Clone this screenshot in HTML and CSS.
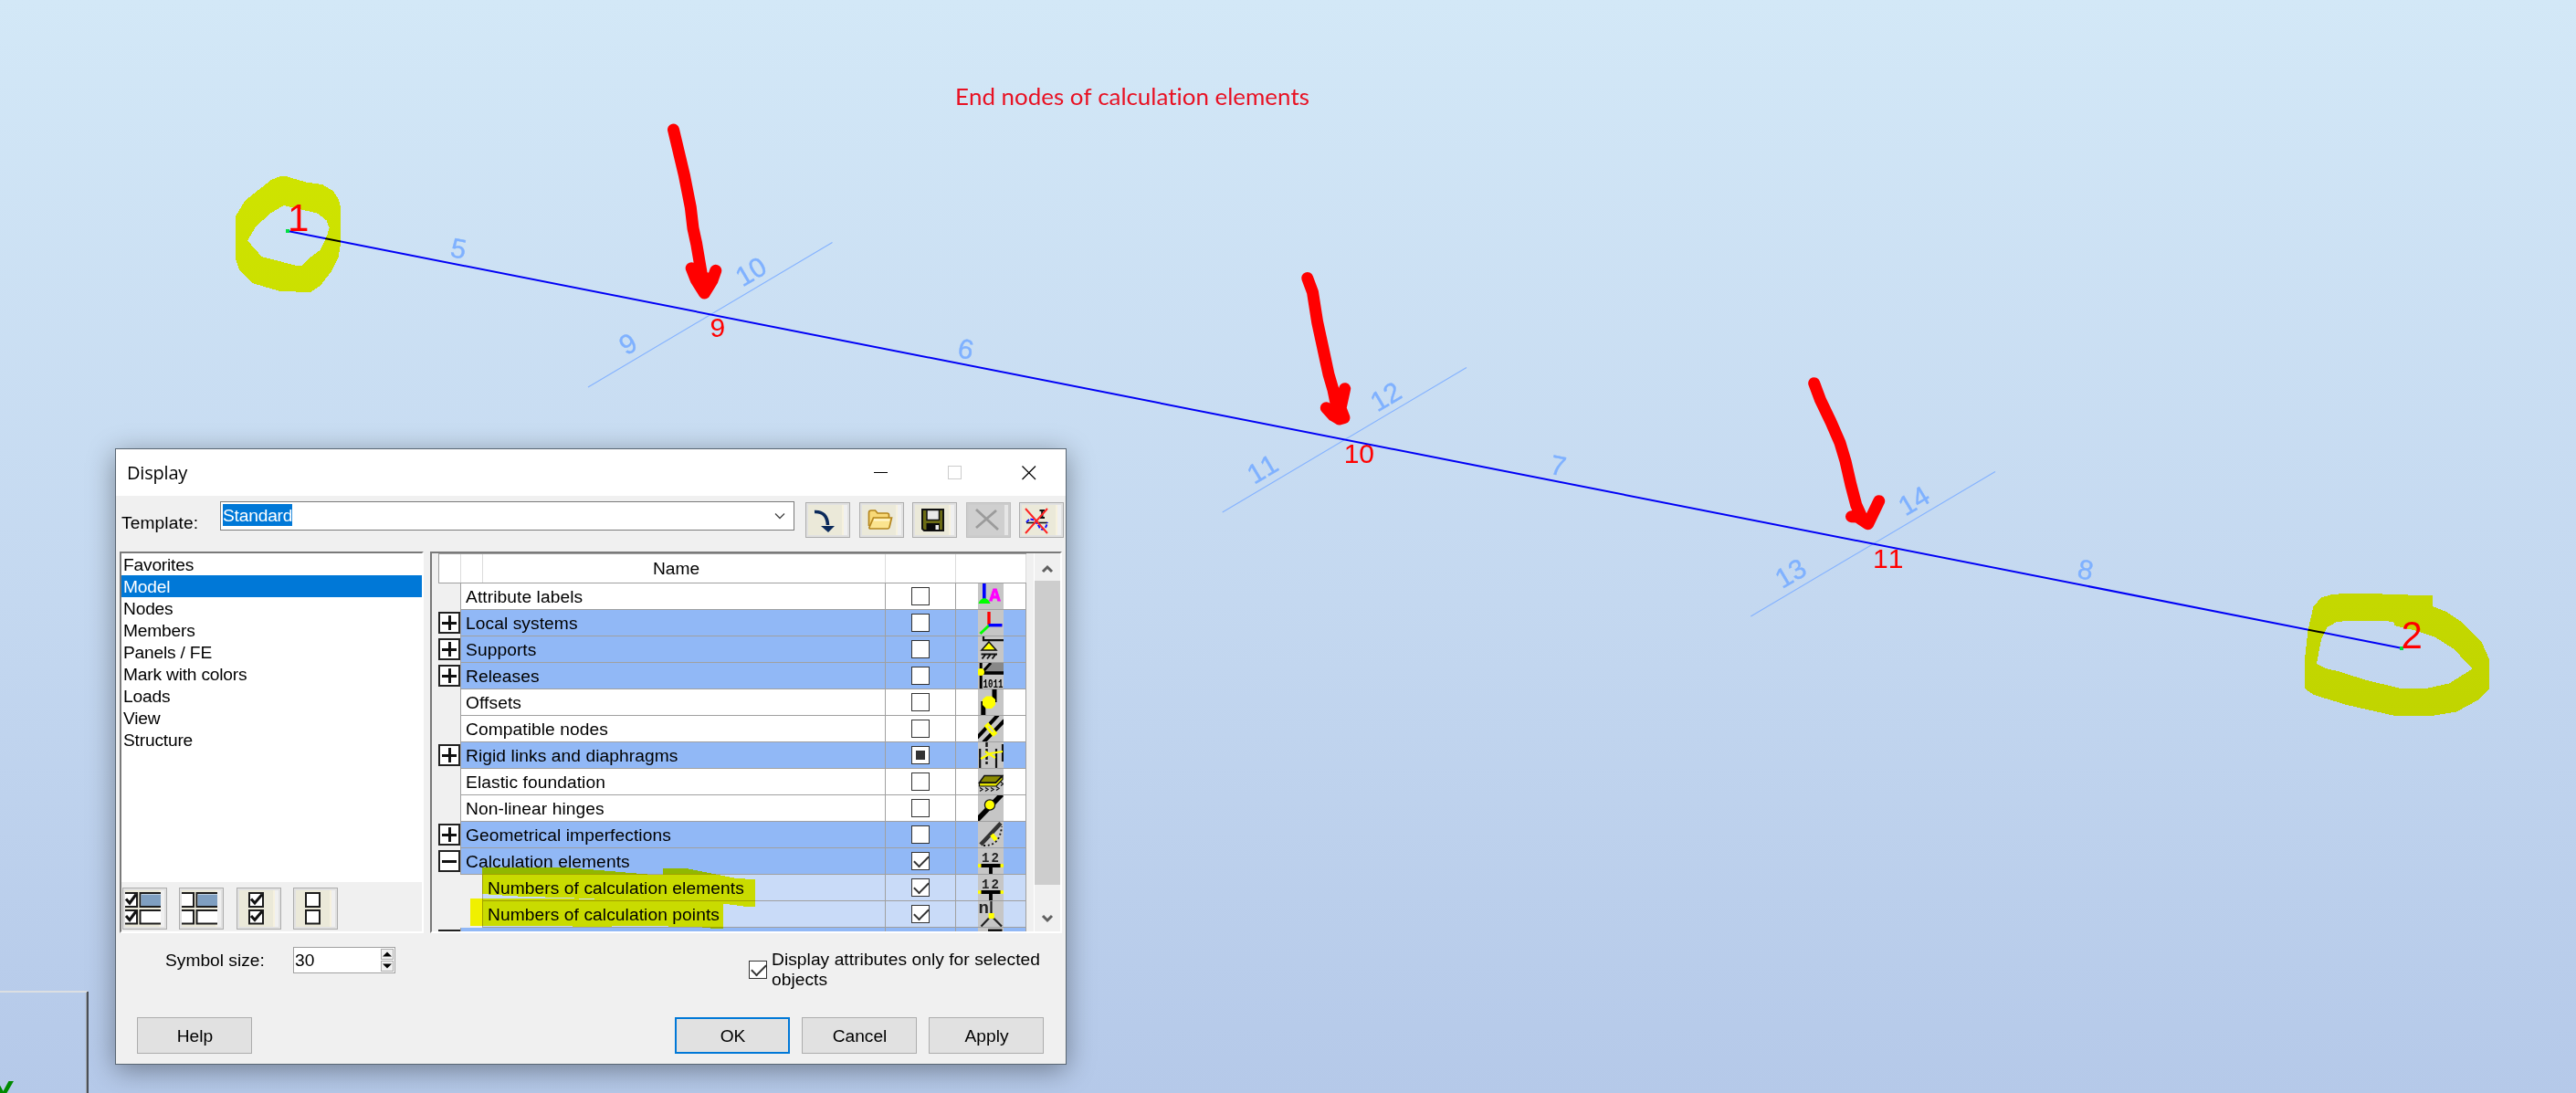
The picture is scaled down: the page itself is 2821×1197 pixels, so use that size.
FILE: index.html
```html
<!DOCTYPE html>
<html lang="en">
<head>
  <meta charset="UTF-8" />
  <meta name="viewport" content="width=device-width, initial-scale=1.0" />
  <title>Display</title>
  <link rel="stylesheet" href="styles.css">
</head>
<body>

<div class="workspace">

  <!-- model view -->
  <svg class="model" width="2821" height="1197" viewBox="0 0 2821 1197">
    <g class="corner">
      <path d="M0 1086H96" stroke="#dcdfe2" stroke-width="2"/>
      <path d="M94.5 1087V1197" stroke="#a3a9b0" stroke-width="1"/>
      <path d="M96 1086V1197" stroke="#4b5058" stroke-width="2"/>
      <text class="axis" x="3.5" y="1210">Y</text>
    </g>

    <g class="local-axes">
      <path d="M644 424L911.500 265.500M1338.700 561L1606 402.500M1917.300 675L2185 516.500"/>
    </g>
    <path class="member" d="M315 253L2629.700 709.700"/>
    <rect x="313" y="251" width="4" height="4" fill="#00e040"/>
    <rect x="2628" y="708" width="4" height="4" fill="#00e040"/>

    <g class="element-no">
      <text transform="translate(500.300 282.300) rotate(11.160)">5</text>
      <text transform="translate(1055.700 392.300) rotate(11.160)">6</text>
      <text transform="translate(1704.500 520) rotate(11.160)">7</text>
      <text transform="translate(2282 634) rotate(11.160)">8</text>
      <text transform="translate(692.900 385.600) rotate(-30.650)">9</text>
      <text transform="translate(827.500 306.200) rotate(-30.650)">10</text>
      <text transform="translate(1387.800 522.500) rotate(-30.650)">11</text>
      <text transform="translate(1522.800 443.200) rotate(-30.650)">12</text>
      <text transform="translate(1966.200 636.800) rotate(-30.650)">13</text>
      <text transform="translate(2101.200 557.200) rotate(-30.650)">14</text>
    </g>

    <g class="node-no">
      <text class="end" x="315" y="253">1</text>
      <text class="end" x="2629.500" y="710">2</text>
      <text x="777.500" y="369">9</text>
      <text x="1471.700" y="507">10</text>
      <text x="2051" y="622">11</text>
    </g>

    <g class="arrows">
      <path d="M737.500 142L742.500 163L749.400 192L756.300 227L759 250L762.700 267L767.800 297L771.400 321M757.200 293.700L762 306L771.400 321L780 307L783.800 296.300M764 300L776 306L771 315Z"/>
      <path d="M1431.700 304.500L1437.500 320L1442.700 353L1449 382L1455 410L1460 427L1463.300 443L1466.700 459M1452.300 446.700L1460 455L1466.700 459L1472 457.500L1468 447L1472.700 425.700M1464 440L1468 452L1461 450Z"/>
      <path d="M1986.700 419.700L1993.500 438L2005 462L2015 485L2021 505L2026.700 530L2032.700 553L2039 567L2045.700 573.700M2027.500 565.700L2034 566L2045.700 573.700L2057.700 548.700"/>
    </g>

    <text class="caption" x="1046" y="115" textLength="388" lengthAdjust="spacingAndGlyphs">End nodes of calculation elements</text>
  </svg>

  <div class="dialog">
    <div class="titlebar">
      <span class="title">Display</span>
      <svg class="win-buttons" width="178" height="16" viewBox="0 0 178 16" fill="none">
        <path d="M0 7.500H15" stroke="#000"/>
        <rect x="81.500" y="0.500" width="14" height="14" stroke="#ccc"/>
        <path d="M162.500 0.500L177 15M177 0.500L162.500 15" stroke="#000" stroke-width="1.200"/>
      </svg>
    </div>

    <div class="template-row">
      <label class="template-label">Template:</label>
      <div class="combo">
        <span class="combo-text">Standard</span>
        <svg width="12" height="8" viewBox="0 0 12 8"><path d="M1 1.500L6 6.500L11 1.500" fill="none" stroke="#444" stroke-width="1.300"/></svg>
      </div>
      <div class="tools">
        <button class="tool"><svg viewBox="0 0 45 35">
          <path d="M8 8.500C17 8 22 13 22.500 23" fill="none" stroke="#0b2a5b" stroke-width="3.600"/>
          <path d="M15 24H30L23 31Z" fill="#0b2a5b"/>
        </svg></button>
        <button class="tool"><svg viewBox="0 0 45 35">
          <path d="M8.500 24V9.500Q8.500 7 11 7H15.500L18 10H28.500Q30.500 10 30.500 12V16" fill="#f8d978" stroke="#b5861d" stroke-width="1.700"/>
          <path d="M9 25.500L13.500 15H33.500L31 25.500Q30.500 27 29 27H10.500Q8.500 27 9 25.500Z" fill="#fbe48f" stroke="#b5861d" stroke-width="1.700"/>
          <path d="M14 17.500H31" stroke="#fff7cf" stroke-width="2"/>
        </svg></button>
        <button class="tool"><svg viewBox="0 0 45 35">
          <path d="M9 6H32V29H11L9 27Z" fill="#6c6c14" stroke="#111" stroke-width="2"/>
          <rect x="14" y="6.500" width="13.500" height="11" fill="#e9e9e9" stroke="#111" stroke-width="1.500"/>
          <rect x="13.500" y="21" width="14.500" height="8" fill="#0a0a0a"/>
          <rect x="23.500" y="23" width="3.500" height="5" fill="#e9e9e9"/>
        </svg></button>
        <button class="tool disabled"><svg viewBox="0 0 45 35">
          <path d="M9 6L33 28M31 7L9 26" fill="none" stroke="#9b9b9b" stroke-width="2.800"/>
        </svg></button>
        <button class="tool"><svg viewBox="0 0 45 35">
          <path d="M20.500 7H26M23.300 7V15M20.500 15H26" stroke="#111" stroke-width="2.200"/>
          <path d="M6 20.500H29" stroke="#111" stroke-width="1.600"/>
          <path d="M6 20Q10 15 14 17.500T21 27Q27 30 29 20" fill="none" stroke="#1414ff" stroke-width="2" stroke-dasharray="4 1.500"/>
          <path d="M5 5L29 32M29 5L5 32" stroke="#f22" stroke-width="1.900"/>
        </svg></button>
      </div>
    </div>

    <div class="panes">
      <div class="pane categories">
        <ul class="category-list">
          <li>Favorites</li>
          <li class="selected">Model</li>
          <li>Nodes</li>
          <li>Members</li>
          <li>Panels / FE</li>
          <li>Mark with colors</li>
          <li>Loads</li>
          <li>View</li>
          <li>Structure</li>
        </ul>
        <div class="check-tools">
          <button class="tool tall"><svg viewBox="0 0 45 42">
            <path d="M40 4H17.500V19H40M40 23H17.500V37.500H40" fill="#fff" stroke="#1c1c1c" stroke-width="2"/>
            <rect x="18.500" y="5.500" width="21.500" height="12.500" fill="#7f9fc1"/>
            <path d="M1 4H14V19H1M1 23H14V37.500H1" fill="#fff" stroke="#1c1c1c" stroke-width="2"/>
            <path d="M2 10.500L6 15L13 5.500M2 29L6 33.500L13 24" fill="none" stroke="#111" stroke-width="3"/>
          </svg></button>
          <button class="tool tall"><svg viewBox="0 0 45 42">
            <path d="M40 4H17.500V19H40M40 23H17.500V37.500H40" fill="#fff" stroke="#1c1c1c" stroke-width="2"/>
            <rect x="18.500" y="5.500" width="21.500" height="12.500" fill="#7f9fc1"/>
            <path d="M1 4H14V19H1M1 23H14V37.500H1" fill="#fff" stroke="#1c1c1c" stroke-width="2"/>
          </svg></button>
          <button class="tool tall"><svg viewBox="0 0 45 42">
            <path d="M12 4H27V19H12ZM12 23H27V37.500H12Z" fill="#fff" stroke="#1c1c1c" stroke-width="2"/>
            <path d="M14 10.500L18 15L26 5.500M14 29L18 33.500L26 24" fill="none" stroke="#111" stroke-width="3"/>
          </svg></button>
          <button class="tool tall"><svg viewBox="0 0 45 42">
            <path d="M12 4H27V19H12ZM12 23H27V37.500H12Z" fill="#fff" stroke="#1c1c1c" stroke-width="2"/>
          </svg></button>
        </div>
      </div>

      <div class="pane attributes">
        <div class="grid">
          <div class="grid-head">
            <span class="h-tree"></span><span class="h-indent"></span>
            <span class="h-name">Name</span>
            <span class="h-check"></span><span class="h-icon"></span>
          </div>

          <div class="row">
            <div class="tree"></div>
            <div class="name">Attribute labels</div>
            <div class="check"><i class="box"></i></div>
            <div class="icon"><svg viewBox="0 0 28 28">
              <path d="M6.800 0V17" stroke="#00f" stroke-width="3.600"/>
              <path d="M0.500 22Q2 17 6.800 16Q12 17 13.500 22Z" fill="#0f0"/>
              <text x="12.500" y="19" class="ico-a">A</text>
            </svg></div>
          </div>
          <div class="row group">
            <div class="tree"><i class="plus"></i></div>
            <div class="name">Local systems</div>
            <div class="check"><i class="box"></i></div>
            <div class="icon"><svg viewBox="0 0 28 28">
              <path d="M12 17L2.500 26" stroke="#0f0" stroke-width="3"/>
              <path d="M12 2V16" stroke="#f00" stroke-width="3.400"/>
              <path d="M11.500 16.700H26.500" stroke="#00f" stroke-width="3.400"/>
            </svg></div>
          </div>
          <div class="row group">
            <div class="tree"><i class="plus"></i></div>
            <div class="name">Supports</div>
            <div class="check"><i class="box"></i></div>
            <div class="icon"><svg viewBox="0 0 28 28">
              <path d="M6 0V4.200H28" fill="none" stroke="#111" stroke-width="2.200"/>
              <path d="M12 6L20 15H4Z" fill="#ff0" stroke="#111" stroke-width="1.500"/>
              <path d="M3.500 19.500H21M8 20L4.500 24.500M13.500 20L10 24.500M19 20L15.500 24.500" stroke="#111" stroke-width="1.900"/>
            </svg></div>
          </div>
          <div class="row group">
            <div class="tree"><i class="plus"></i></div>
            <div class="name">Releases</div>
            <div class="check"><i class="box"></i></div>
            <div class="icon"><svg viewBox="0 0 28 28">
              <path d="M14 0H28V10H7Z" fill="#888"/>
              <path d="M3.200 0V28M5 10L14 0" stroke="#000" stroke-width="3"/>
              <path d="M5 11H28" stroke="#000" stroke-width="3.600"/>
              <circle cx="3" cy="10" r="4" fill="#ff0"/>
              <text x="5.500" y="26.500" class="ico-bits" textLength="22" lengthAdjust="spacingAndGlyphs">1011</text>
            </svg></div>
          </div>
          <div class="row">
            <div class="tree"></div>
            <div class="name">Offsets</div>
            <div class="check"><i class="box"></i></div>
            <div class="icon"><svg viewBox="0 0 28 28">
              <path d="M5.800 13V28M18 0V14" stroke="#000" stroke-width="5"/>
              <path d="M9 7.500H15L19 11V17L15 21H9L5 17V11Z" fill="#ff0"/>
            </svg></div>
          </div>
          <div class="row">
            <div class="tree"></div>
            <div class="name">Compatible nodes</div>
            <div class="check"><i class="box"></i></div>
            <div class="icon"><svg viewBox="0 0 28 28">
              <path d="M-1 24L22 -1M6 29L29 5" stroke="#000" stroke-width="4"/>
              <path d="M9 9L19 21" stroke="#ff0" stroke-width="6"/>
              <path d="M11.500 11.500L16.500 17.500" stroke="#c9c9c9" stroke-width="1.500"/>
            </svg></div>
          </div>
          <div class="row group">
            <div class="tree"><i class="plus"></i></div>
            <div class="name">Rigid links and diaphragms</div>
            <div class="check"><i class="box partial"></i></div>
            <div class="icon"><svg viewBox="0 0 28 28">
              <path d="M2.200 7V28M20 7V28M27 2V21" stroke="#111" stroke-width="2.200"/>
              <path d="M9.500 0V24" stroke="#111" stroke-width="2.400" stroke-dasharray="5 2"/>
              <path d="M3 18L14 12L27 10M8 10L19 17" fill="none" stroke="#ff0" stroke-width="2.200"/>
            </svg></div>
          </div>
          <div class="row">
            <div class="tree"></div>
            <div class="name">Elastic foundation</div>
            <div class="check"><i class="box"></i></div>
            <div class="icon"><svg viewBox="0 0 28 28">
              <path d="M7 7.500H26.500L19.500 15H1.500Z" fill="#8a8a00" stroke="#111" stroke-width="1.500"/>
              <path d="M1.500 15.500V19H20L27 11.500V8L19.500 15.500Z" fill="#e3e300" stroke="#111" stroke-width="1.200"/>
              <path d="M2 20.500l3 2-3 2M8 20.500l3 2-3 2M14 20.500l3 2-3 2M20 19.500l3 2-3 2M25 14.500l2.500 2-2.500 2" fill="none" stroke="#111" stroke-width="1.300"/>
            </svg></div>
          </div>
          <div class="row">
            <div class="tree"></div>
            <div class="name">Non-linear hinges</div>
            <div class="check"><i class="box"></i></div>
            <div class="icon"><svg viewBox="0 0 28 28">
              <path d="M-1 27L26 -1" stroke="#000" stroke-width="5.500"/>
              <circle cx="13" cy="10.500" r="5.600" fill="#ff0" stroke="#111" stroke-width="1.300"/>
            </svg></div>
          </div>
          <div class="row group">
            <div class="tree"><i class="plus"></i></div>
            <div class="name">Geometrical imperfections</div>
            <div class="check"><i class="box"></i></div>
            <div class="icon"><svg viewBox="0 0 28 28">
              <path d="M3 25L25 1.500" stroke="#333" stroke-width="4.500"/>
              <path d="M15 14L20 20" stroke="#ff0" stroke-width="4.500"/>
              <path d="M6 26Q24 27 26 5" fill="none" stroke="#111" stroke-width="1.900" stroke-dasharray="2 2.600"/>
            </svg></div>
          </div>
          <div class="row group">
            <div class="tree"><i class="plus minus"></i></div>
            <div class="name">Calculation elements</div>
            <div class="check"><i class="box ticked"></i></div>
            <div class="icon"><svg viewBox="0 0 28 28">
              <text x="4" y="14.500" class="ico-12">12</text>
              <path d="M0 19H28" stroke="#ff0" stroke-width="3.600"/>
              <path d="M3.500 19H24.500M14 19V28" stroke="#000" stroke-width="3.800"/>
            </svg></div>
          </div>
          <div class="row sub">
            <div class="tree"></div>
            <div class="name">Numbers of calculation elements</div>
            <div class="check"><i class="box ticked"></i></div>
            <div class="icon"><svg viewBox="0 0 28 28">
              <text x="4" y="14.500" class="ico-12">12</text>
              <path d="M0 19H28" stroke="#ff0" stroke-width="3.600"/>
              <path d="M3.500 19H24.500M14 19V28" stroke="#000" stroke-width="3.800"/>
            </svg></div>
          </div>
          <div class="row sub">
            <div class="tree"></div>
            <div class="name">Numbers of calculation points</div>
            <div class="check"><i class="box ticked"></i></div>
            <div class="icon"><svg viewBox="0 0 28 28">
              <text x="0.500" y="13" class="ico-n">n</text>
              <path d="M14.500 0V14M12 18.500L3.500 27.500M17 18.500L26 27.500" stroke="#222" stroke-width="2.200"/>
              <rect x="11.700" y="13" width="6" height="6" fill="#ff0"/>
            </svg></div>
          </div>
          <div class="row group">
            <div class="tree"><i class="plus"></i></div>
            <div class="name"></div>
            <div class="check"><i class="box"></i></div>
            <div class="icon"><svg viewBox="0 0 28 28">
              <path d="M12.500 28V3H25V28" fill="none" stroke="#111" stroke-width="3"/>
            </svg></div>
          </div>
        </div>

        <div class="scrollbar">
          <span class="arrow"><svg width="14" height="10" viewBox="0 0 14 10"><path d="M2 8L7 3L12 8" fill="none" stroke="#606060" stroke-width="3"/></svg></span>
          <span class="thumb"></span>
          <span class="arrow down"><svg width="14" height="10" viewBox="0 0 14 10"><path d="M2 2L7 7L12 2" fill="none" stroke="#606060" stroke-width="3"/></svg></span>
        </div>
      </div>
    </div>

    <div class="options">
      <label class="size-label">Symbol size:</label>
      <div class="spinner">
        <span>30</span>
        <div class="spin-buttons">
          <i><svg width="10" height="6" viewBox="0 0 10 6"><path d="M0 5.500L5 0.500L10 5.500Z"/></svg></i>
          <i><svg width="10" height="6" viewBox="0 0 10 6"><path d="M0 0.500L5 5.500L10 0.500Z"/></svg></i>
        </div>
      </div>
      <div class="only-selected">
        <i class="box ticked"></i>
        <span>Display attributes only for selected<br>objects</span>
      </div>
    </div>

    <div class="footer">
      <button class="btn help">Help</button>
      <button class="btn default">OK</button>
      <button class="btn">Cancel</button>
      <button class="btn">Apply</button>
    </div>
  </div>

  <!-- highlighter strokes -->
  <svg class="marker" width="2821" height="1197" viewBox="0 0 2821 1197" shape-rendering="crispEdges">
    <path d="M307 193H313L335 199.500L353 202L364.500 209L370.500 217.500L373 227V267L370.500 282L362 298.500L351 312.500L340 320L307 319L276 310L262 296L258 283V237L268 220L297 197ZM310.500 225L295.500 234L280 248.500L271 263.500L286.500 281L309.500 287L323 290.500H331L341 281L351 273.500L358.500 257L360.500 249.500L357.500 241.500L347.500 233.500Z"/>
    <path d="M2565 650H2609V651L2664 652V664L2680 670.500L2697 682L2718 704L2726 722V754L2713 767L2690 779.500L2663 784H2623L2570 772L2534 761L2525 755L2524 752V722L2527.500 690L2533.500 664L2542 654.500L2552 651.500ZM2569 680L2558 681.500L2548.500 687L2542 700L2537 727L2547 732L2560 735L2590 744.500L2629 754H2657L2682 748.500L2707.500 732.500L2687.500 711L2667 698L2647 691L2621.500 685V681.500L2613 680Z"/>
    <path d="M527.500 949.500H612L650 952.500L709 957.500L726 958V951H752L771 955L804 961.500L827 963.500V992.500H814L791.500 989.500L673 985.500L618 983L576 982L557 981L527.500 979Z"/>
    <path d="M515 984H618L650 985L700 986L792 989.500V1016.500H778.500L764 1015L700 1014L640 1015L600 1013.500L552 1013.500L515 1014Z"/>
  </svg>

</div>

</body>
</html>
```

FILE: styles.css
```css
:root {
  --face: #f0f0f0;
  --line: #a0a0a0;
  --accent: #0078d7;
  --group: #91b8f6;
  --sub: #c9dbf8;
}
* {
  box-sizing: border-box;
}
body {
  margin: 0;
  overflow: hidden;
  font-family: "Liberation Sans", Arial, sans-serif;
  font-size: 19.2px;
  color: #000;
}
.workspace {
  position: relative;
  width: 2821px;
  height: 1197px;
  overflow: hidden;
  background: linear-gradient(#d3e8f7, #c4d8f0 55%, #b5c9e9);
}

/* model view */
.model {
  display: block;
}
.model text {
  font-kerning: none;
}
.axis {
  font-size: 36px;
  font-weight: bold;
  fill: #008a00;
  text-anchor: middle;
}
.local-axes path {
  stroke: #84b2ff;
  stroke-width: 1.1;
}
.member {
  stroke: #0000f5;
  stroke-width: 2;
}
.element-no {
  font-size: 30px;
  fill: #7fb1ff;
  stroke: #7fb1ff;
  stroke-width: 0.4;
  text-anchor: middle;
}
.node-no {
  font-size: 30px;
  fill: #f00;
}
.node-no .end {
  font-size: 42px;
}
.arrows path {
  fill: none;
  stroke: #f00;
  stroke-width: 13;
  stroke-linecap: round;
  stroke-linejoin: round;
}
.caption {
  font-family: Lato, sans-serif;
  font-size: 25px;
  font-variant-ligatures: none;
  fill: #e81123;
}
.marker {
  position: absolute;
  left: 0;
  top: 0;
  fill: #ff0;
  fill-rule: evenodd;
  mix-blend-mode: multiply;
  pointer-events: none;
}

/* dialog */
.dialog {
  position: absolute;
  left: 126px;
  top: 491px;
  width: 1042px;
  height: 675px;
  display: flex;
  flex-direction: column;
  background: var(--face);
  border: 1px solid #596673;
  box-shadow: 0 6px 28px rgba(0, 0, 0, 0.38);
}
.titlebar {
  display: flex;
  align-items: center;
  justify-content: space-between;
  height: 51px;
  padding: 0 32px 0 12px;
  background: #fff;
}
.title {
  font-family: "Open Sans", "Noto Sans", sans-serif;
  font-size: 20px;
  letter-spacing: -0.2px;
}
.template-row {
  display: flex;
  align-items: flex-start;
  height: 61px;
  padding: 6px 2px 0 6px;
}
.template-label {
  width: 108px;
  padding-top: 13px;
  letter-spacing: 0.1px;
}
.combo {
  display: flex;
  align-items: center;
  justify-content: space-between;
  width: 629px;
  height: 32px;
  padding: 0 9px 3px 2px;
  background: #fff;
  border: 1px solid #7a7a7a;
}
.combo svg {
  margin-top: 3px;
}
.combo-text {
  width: 76px;
  height: 24px;
  line-height: 25px;
  letter-spacing: -0.2px;
  color: #fff;
  background: var(--accent);
}
.tools {
  display: flex;
  gap: 9.5px;
  margin: 1px 0 0 12px;
}
.tool {
  width: 49px;
  height: 39px;
  padding: 1px;
  background: #ebe9d9;
  border: 1px solid #adadad;
  box-shadow: inset 0 0 0 2px #e1e1e1, inset -4px 0 0 2px #f0f0f0, inset -6px 0 0 2px #f6f1de;
}
.tool svg {
  display: block;
  width: 45px;
  height: 35px;
}
.tool.tall {
  height: 46px;
}
.tool.tall svg {
  height: 42px;
}
.tool.disabled {
  background: #cfcfcf;
  border-color: #bfbfbf;
  box-shadow: inset 0 0 0 2px #ccc, inset -4px 0 0 2px #e6e6e6;
}

.panes {
  display: flex;
  gap: 7px;
  height: 418px;
  padding-left: 4px;
}
.pane {
  border: 2px solid;
  border-color: #7a7a7a #fff #fff #7a7a7a;
  overflow: hidden;
}
.categories {
  width: 333px;
}
.category-list {
  height: 360px;
  margin: 0;
  padding: 0;
  list-style: none;
  letter-spacing: -0.2px;
  background: #fff;
}
.category-list li {
  height: 24px;
  padding-left: 2px;
  line-height: 26px;
}
.category-list .selected {
  color: #fff;
  background: var(--accent);
}
.check-tools {
  display: flex;
  gap: 13.4px;
  padding: 6px 0 0 1px;
}
.attributes {
  display: flex;
  width: 692px;
}

/* attribute grid */
.grid {
  width: 644px;
  margin-left: 7px;
}
.grid-head {
  display: flex;
  height: 33px;
  background: #fff;
  border: 1px solid var(--line);
  border-right: 0;
}
.grid-head span {
  border-right: 1px solid #dcdcdc;
}
.h-tree,
.h-indent {
  width: 24px;
}
.h-name {
  width: 441px;
  padding: 5px 17px 0 0;
  text-align: center;
}
.h-check,
.h-icon {
  width: 77px;
}
.row {
  --fill: #fff;
  display: flex;
  height: 29px;
}
.row.group {
  --fill: var(--group);
}
.row.sub {
  --fill: var(--sub);
}
.tree {
  width: 24px;
  padding-top: 2px;
}
.sub .tree {
  width: 48px;
}
.name {
  flex: 1;
  padding: 1px 0 0 5px;
  line-height: 28px;
  letter-spacing: 0.08px;
  white-space: nowrap;
  background: var(--fill);
  border-left: 1px solid var(--line);
  border-bottom: 1px solid var(--line);
}
.check,
.icon {
  display: flex;
  align-items: center;
  justify-content: center;
  width: 77px;
  background: var(--fill);
  border-left: 1px solid var(--line);
  border-bottom: 1px solid var(--line);
}
.icon {
  width: 78px;
  border-right: 1px solid var(--line);
}
.icon svg {
  width: 28px;
  height: 28px;
  background: #c6c6c6;
  overflow: hidden;
}
.ico-a {
  font: bold 20px "Liberation Mono", monospace;
  fill: #f0f;
  stroke: #f0f;
  stroke-width: 0.8;
}
.ico-bits {
  font: bold 12px "Liberation Mono", monospace;
}
.ico-12 {
  font: bold 14px "Liberation Mono", monospace;
  letter-spacing: 2px;
  fill: #222;
}
.ico-n {
  font: bold 19px "Liberation Mono", monospace;
  fill: #222;
}
.plus {
  display: block;
  width: 24px;
  height: 24px;
  border: 2px solid #222;
  background:
    linear-gradient(#111, #111) center / 16px 3px no-repeat,
    linear-gradient(#111, #111) center / 3px 16px no-repeat,
    #fff;
}
.plus.minus {
  background: linear-gradient(#111, #111) center / 16px 3px no-repeat, #fff;
}
.box {
  display: block;
  flex: none;
  width: 20px;
  height: 20px;
  background: #fff;
  border: 1px solid #333;
}
.box.partial {
  background: linear-gradient(#333, #333) center / 10px 10px no-repeat, #fff;
}
.box.ticked::after {
  content: "";
  display: block;
  width: 14px;
  height: 7px;
  margin: 3px 0 0 2px;
  border-left: 2px solid #333;
  border-bottom: 2px solid #333;
  transform: rotate(-45deg);
}

.scrollbar {
  display: flex;
  flex-direction: column;
  width: 29px;
  margin-left: 8px;
  border-left: 1px solid #fff;
}
.arrow {
  display: flex;
  align-items: center;
  justify-content: center;
  height: 30px;
  padding-top: 3px;
}
.thumb {
  height: 333px;
  background: #cdcdcd;
}
.arrow.down {
  margin-top: 20px;
}

/* lower part */
.options {
  display: flex;
  align-items: flex-start;
  height: 92px;
  padding: 15px 0 0 54px;
}
.size-label {
  width: 140px;
  padding-top: 4px;
}
.spinner {
  display: flex;
  align-items: center;
  justify-content: space-between;
  width: 112px;
  height: 29px;
  padding: 0 1px;
  background: #fff;
  border: 1px solid var(--line);
}
.spin-buttons i {
  display: flex;
  align-items: center;
  justify-content: center;
  width: 14px;
  height: 12px;
  margin-bottom: 1px;
  background: var(--face);
  border: 1px solid #adadad;
}
.only-selected {
  display: flex;
  gap: 5px;
  margin-left: 387px;
  line-height: 22px;
}
.only-selected .box {
  margin-top: 15px;
}
.only-selected span {
  margin-top: 3px;
  letter-spacing: 0.05px;
  white-space: nowrap;
}
.footer {
  display: flex;
  gap: 13px;
  padding-left: 23px;
}
.btn {
  width: 126px;
  height: 40px;
  padding: 1px 0 0 1px;
  font: inherit;
  color: #000;
  background: #e1e1e1;
  border: 1px solid #adadad;
}
.btn.help {
  margin-right: 450px;
}
.btn.default {
  border: 2px solid var(--accent);
}
```
